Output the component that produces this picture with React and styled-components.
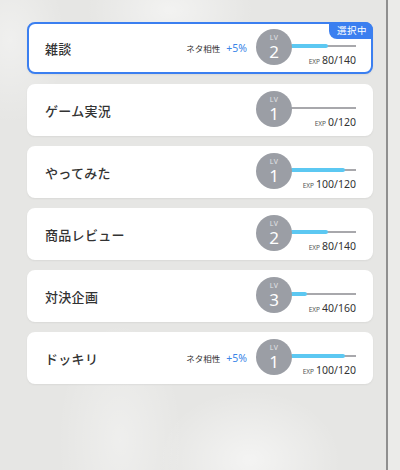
import styled, { createGlobalStyle } from "styled-components";

const GlobalStyle = createGlobalStyle`
  html, body {
    margin: 0;
    padding: 0;
  }
  body {
    font-family: "Noto Sans", "Noto Sans CJK JP", sans-serif;
    background: #e8e8e6;
  }
`;

const Page = styled.div`
  width: 400px;
  height: 470px;
  display: flex;
  overflow: hidden;
  background-color: #e6e6e4;
  background-image:
    radial-gradient(ellipse 130px 100px at 250px 460px, rgba(255, 255, 255, 0.55), transparent 70%),
    radial-gradient(ellipse 90px 170px at 120px 440px, rgba(255, 255, 255, 0.35), transparent 70%),
    radial-gradient(ellipse 120px 80px at 170px 10px, rgba(255, 255, 255, 0.5), transparent 70%),
    radial-gradient(ellipse 80px 120px at 10px 40px, rgba(255, 255, 255, 0.4), transparent 70%);
`;

const ListPane = styled.div`
  width: 386px;
  box-sizing: border-box;
  padding: 22px 13px 0 27px;
  display: flex;
  flex-direction: column;
  gap: 10px;
`;

const Divider = styled.div`
  width: 2px;
  flex-shrink: 0;
  background: #8f8f8f;
`;

const Filler = styled.div`
  flex: 1;
  background: rgba(255, 255, 255, 0.2);
`;

const Card = styled.div`
  position: relative;
  height: 52px;
  box-sizing: border-box;
  border-radius: 8px;
  background: #fff;
  border: 2px solid ${(p) => (p.$selected ? "#3b7ff0" : "#fff")};
  box-shadow: 0 1px 2px rgba(0, 0, 0, 0.06);
  display: flex;
  align-items: center;
  padding: 0 15px 0 16px;
`;

const Badge = styled.div`
  position: absolute;
  top: -2px;
  right: -2px;
  height: 17px;
  padding: 0 6px 0 8px;
  background: #3b7ff0;
  color: #fff;
  font-size: 9.5px;
  line-height: 17px;
  border-radius: 0 8px 0 8px;
  letter-spacing: 0.5px;
`;

const Title = styled.div`
  flex: 1;
  font-size: 13px;
  font-weight: 500;
  color: #333;
  letter-spacing: 0.3px;
`;

const Bonus = styled.div`
  display: flex;
  align-items: center;
  gap: 6px;
  margin-right: 9px;
`;

const BonusLabel = styled.span`
  font-size: 8.5px;
  color: #333;
`;

const BonusValue = styled.span`
  font-size: 10.5px;
  color: #3b86e8;
`;

const Level = styled.div`
  display: flex;
  align-items: flex-start;
`;

const Circle = styled.div`
  position: relative;
  z-index: 1;
  width: 36px;
  height: 36px;
  border-radius: 50%;
  background: #9b9ea5;
  color: #fff;
  display: flex;
  flex-direction: column;
  align-items: center;
  justify-content: center;
  margin-top: 1px;
`;

const LvLabel = styled.span`
  font-size: 7px;
  line-height: 8px;
  color: #e4e5e8;
  letter-spacing: 0.5px;
`;

const LvNum = styled.span`
  font-size: 17px;
  line-height: 19px;
`;

const BarColumn = styled.div`
  width: 66px;
  margin-left: -2px;
  display: flex;
  flex-direction: column;
  align-items: flex-end;
  padding-top: 16px;
`;

const Track = styled.div`
  position: relative;
  width: 100%;
  height: 4px;
  display: flex;
  align-items: center;

  &::before {
    content: "";
    position: absolute;
    left: 0;
    right: 0;
    height: 1.5px;
    background: #a8a8ac;
  }
`;

const Fill = styled.div`
  position: relative;
  height: 4px;
  border-radius: 2px;
  background: #5cc8f2;
`;

const Exp = styled.div`
  margin-top: 6px;
  color: #333;
  font-size: 10.5px;
  line-height: 12px;
  display: flex;
  align-items: baseline;
  gap: 2px;
`;

const ExpLabel = styled.span`
  font-size: 6.5px;
  color: #555;
`;

const genres = [
  { name: "雑談", lv: 2, exp: 80, max: 140, bonus: "+5%", selected: true },
  { name: "ゲーム実況", lv: 1, exp: 0, max: 120 },
  { name: "やってみた", lv: 1, exp: 100, max: 120 },
  { name: "商品レビュー", lv: 2, exp: 80, max: 140 },
  { name: "対決企画", lv: 3, exp: 40, max: 160 },
  { name: "ドッキリ", lv: 1, exp: 100, max: 120, bonus: "+5%" },
];

const GenreCard = ({ g }) => (
  <Card $selected={g.selected}>
    {g.selected && <Badge>選択中</Badge>}
    <Title>{g.name}</Title>
    {g.bonus && (
      <Bonus>
        <BonusLabel>ネタ相性</BonusLabel>
        <BonusValue>{g.bonus}</BonusValue>
      </Bonus>
    )}
    <Level>
      <Circle>
        <LvLabel>LV</LvLabel>
        <LvNum>{g.lv}</LvNum>
      </Circle>
      <BarColumn>
        <Track>
          {g.exp > 0 && <Fill style={{ width: `${(g.exp / g.max) * 100}%` }} />}
        </Track>
        <Exp>
          <ExpLabel>EXP</ExpLabel>
          {g.exp}/{g.max}
        </Exp>
      </BarColumn>
    </Level>
  </Card>
);

export default function App() {
  return (
    <>
      <GlobalStyle />
      <Page>
        <ListPane>
          {genres.map((g) => (
            <GenreCard key={g.name} g={g} />
          ))}
        </ListPane>
        <Divider />
        <Filler />
      </Page>
    </>
  );
}
